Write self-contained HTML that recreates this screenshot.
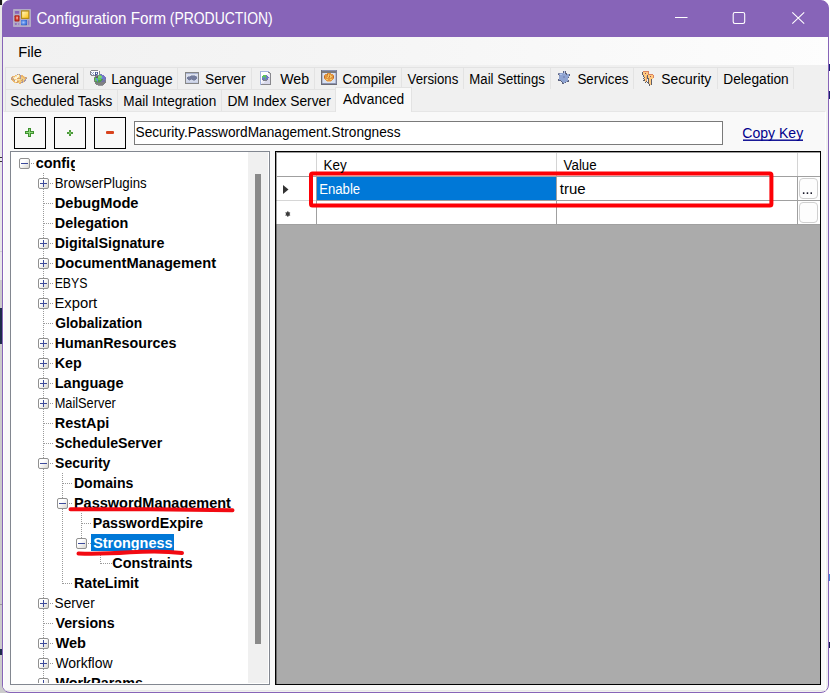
<!DOCTYPE html><html><head><meta charset="utf-8"><title>Configuration Form</title><style>

html,body{margin:0;padding:0;}
body{width:830px;height:693px;background:#fff;overflow:hidden;position:relative;font-family:"Liberation Sans",sans-serif;}
div,span{box-sizing:border-box;}
.abs{position:absolute;}
.t{position:absolute;white-space:nowrap;line-height:20px;height:20px;transform-origin:0 0;font-family:"Liberation Sans",sans-serif;}
#win{position:absolute;left:2px;top:0;width:827px;height:693px;background:linear-gradient(180deg,#8764b8 0,#8764b8 36px,#f0f0f0 36px);border:1px solid #8764b8;border-radius:8px;overflow:hidden;}
#title{position:absolute;left:0;top:0;width:100%;height:37px;background:#8764b8;}
#menu{position:absolute;left:0;top:37px;width:100%;height:28px;background:linear-gradient(90deg,#f1f1f1 0%,#f6f6f6 50%,#fdfdfd 100%);}
.tab{position:absolute;height:22px;border:1px solid #e3e3e3;border-bottom:none;background:#f0f0f0;}
#page{position:absolute;left:3px;top:111px;width:823px;height:580px;background:#f9f9f9;border:1px solid #fff;border-top:1px solid #e6e6e6;border-bottom:1px solid #e8e8e8;}
.btn{position:absolute;top:117px;width:32px;height:32px;border:1px solid #000;background:#f9f9f9;}
#tb{position:absolute;left:134px;top:121px;width:589px;height:24px;border:1px solid #7a7a7a;background:#fff;}
#tree{position:absolute;left:10px;top:151px;width:260px;height:534px;border:1px solid #828790;background:#fff;overflow:hidden;}
#grid{position:absolute;left:275px;top:151px;width:546px;height:534px;border:1px solid #000;background:#ababab;overflow:hidden;}
#grid:after{content:"";position:absolute;left:0;top:0;width:100%;height:100%;box-shadow:inset 1px 1px 0 rgba(0,0,0,.38);}
.exp{position:absolute;width:11px;height:11px;border:1px solid #919191;border-radius:2px;background:linear-gradient(135deg,#fff 0%,#fff 35%,#d8d6d0 100%);}
.exp:before{content:"";position:absolute;left:1px;top:4px;width:7px;height:1px;background:#3c4a9a;}
.exp.p:after{content:"";position:absolute;left:4px;top:1px;width:1px;height:7px;background:#3c4a9a;}
.vd{position:absolute;width:1px;background:repeating-linear-gradient(180deg,#9a9a9a 0,#9a9a9a 1px,transparent 1px,transparent 2px);}
.hd{position:absolute;height:1px;background:repeating-linear-gradient(90deg,#9a9a9a 0,#9a9a9a 1px,transparent 1px,transparent 2px);}

</style></head><body>
<div class="abs" style="left:0;top:0;width:3px;height:280px;background:#e8e8e8"></div>
<div class="abs" style="left:0;top:280px;width:3px;height:413px;background:#cbcbcb"></div>
<div class="abs" style="left:0;top:683px;width:10px;height:10px;background:#cbcbcb"></div>
<div class="abs" style="left:0;top:0;width:2px;height:5px;background:#181818"></div>
<div class="abs" style="left:0;top:157px;width:2px;height:1px;background:#333"></div>
<div class="abs" style="left:0;top:161px;width:2px;height:1px;background:#333"></div>
<div class="abs" style="left:0;top:251px;width:2px;height:1px;background:#d0d0d0"></div>
<div class="abs" style="left:0;top:308px;width:2px;height:36px;background:#1c2a4a"></div>
<div class="abs" style="left:0;top:604px;width:2px;height:1px;background:#999"></div>
<div class="abs" style="left:0;top:649px;width:2px;height:6px;background:#1c2a4a"></div>
<div class="abs" style="left:829px;top:64px;width:1px;height:7px;background:#1c1c7a"></div>
<div class="abs" style="left:829px;top:91px;width:1px;height:8px;background:#1c2070"></div>
<div class="abs" style="left:829px;top:574px;width:1px;height:7px;background:#4a8ae0"></div>
<div class="abs" style="left:829px;top:642px;width:1px;height:6px;background:#1c2050"></div>
<div id="win">
<div id="in" class="abs" style="left:-3px;top:-1px;width:830px;height:693px;">
<div id="title" style="left:0;width:830px"></div>
<div id="menu" style="left:0;width:830px"></div>
<svg class="abs" style="left:13px;top:9px" width="18" height="18" viewBox="0 0 18 18">
<defs>
<linearGradient id="ty" x1="0" y1="0" x2="1" y2="1"><stop offset="0" stop-color="#fff4c0"/><stop offset="1" stop-color="#ffc414"/></linearGradient>
<radialGradient id="tr" cx=".5" cy=".45" r=".6"><stop offset="0" stop-color="#f07868"/><stop offset=".5" stop-color="#cc3020"/><stop offset="1" stop-color="#9c1c14"/></radialGradient>
<radialGradient id="tb" cx=".4" cy=".45" r=".7"><stop offset="0" stop-color="#a4c4ff"/><stop offset=".6" stop-color="#4a7ee0"/><stop offset="1" stop-color="#2c58b8"/></radialGradient>
</defs>
<rect x="0" y="0" width="18" height="18" rx=".8" fill="#b3abc6"/>
<rect x="1.900" y="1.900" width="4.300" height="2.900" rx=".5" fill="#8764b8"/>
<rect x="1.900" y="14" width="1.900" height="2" rx=".4" fill="#8f70bc"/>
<rect x="5.100" y="14" width="1.200" height="2" rx=".4" fill="#9a80c0"/>
<rect x="15.100" y="11.300" width="1.200" height="4.700" rx=".4" fill="#9478be"/>
<rect x="8" y="1.200" width="8.400" height="8.800" rx=".6" fill="#b48c18"/>
<rect x="9.100" y="2.600" width="6.200" height="6.200" fill="url(#ty)"/>
<rect x="1.500" y="6.200" width="5" height="6.400" rx="1" fill="url(#tr)"/>
<path d="M3.200 7.800h1.800l-.5 2.800h-.8z" fill="#f8b0a8" opacity=".85"/>
<rect x="8" y="11.100" width="6.100" height="5.100" rx=".6" fill="url(#tb)"/>
</svg>
<svg class="abs" style="left:660px;top:0" width="160" height="37" viewBox="660 0 160 37" fill="none" stroke="#fff" stroke-width="1.1">
<path d="M675 17.5H687.5"/>
<rect x="733.2" y="12.5" width="11.5" height="11" rx="1.7"/>
<path d="M792.3 12.3L804.2 23.7M804.2 12.3L792.3 23.7"/>
</svg>
<div class="tab" style="left:5px;top:67px;width:79px;"></div>
<div class="tab" style="left:83px;top:67px;width:95px;"></div>
<div class="tab" style="left:177px;top:67px;width:75px;"></div>
<div class="tab" style="left:251px;top:67px;width:64px;"></div>
<div class="tab" style="left:314px;top:67px;width:88px;"></div>
<div class="tab" style="left:401px;top:67px;width:63px;"></div>
<div class="tab" style="left:463px;top:67px;width:88px;"></div>
<div class="tab" style="left:550px;top:67px;width:84px;"></div>
<div class="tab" style="left:633px;top:67px;width:85px;"></div>
<div class="tab" style="left:717px;top:67px;width:77px;"></div>
<div class="tab" style="left:5px;top:89px;width:113px;"></div>
<div class="tab" style="left:117px;top:89px;width:105px;"></div>
<div class="tab" style="left:221px;top:89px;width:115px;"></div>
<div id="page"></div>
<div class="tab" style="left:335px;top:87px;width:77px;height:25px;background:#f9f9f9;border-color:#e3e3e3;"></div>
<svg class="abs" style="left:11px;top:74px" width="16" height="10" viewBox="0 0 16 10" shape-rendering="crispEdges"><rect x="6" y="0" width="1" height="1" fill="#a596a6"/><rect x="7" y="0" width="1" height="1" fill="#f3cd7c"/><rect x="8" y="0" width="1" height="1" fill="#a596a6"/><rect x="4" y="1" width="1" height="1" fill="#ecb46c"/><rect x="5" y="1" width="1" height="1" fill="#f3cd7c"/><rect x="6" y="1" width="2" height="1" fill="#fdf3dc"/><rect x="8" y="1" width="1" height="1" fill="#f3cd7c"/><rect x="9" y="1" width="1" height="1" fill="#a596a6"/><rect x="10" y="1" width="2" height="1" fill="#ecb46c"/><rect x="1" y="2" width="3" height="1" fill="#ecb46c"/><rect x="4" y="2" width="2" height="1" fill="#f8e2ae"/><rect x="6" y="2" width="2" height="1" fill="#fdf3dc"/><rect x="8" y="2" width="1" height="1" fill="#f3cd7c"/><rect x="9" y="2" width="1" height="1" fill="#a596a6"/><rect x="10" y="2" width="3" height="1" fill="#ecb46c"/><rect x="13" y="2" width="1" height="1" fill="#f8e2ae"/><rect x="0" y="3" width="1" height="1" fill="#ecb46c"/><rect x="1" y="3" width="1" height="1" fill="#a596a6"/><rect x="2" y="3" width="2" height="1" fill="#f8e2ae"/><rect x="4" y="3" width="3" height="1" fill="#fdf3dc"/><rect x="7" y="3" width="2" height="1" fill="#f3cd7c"/><rect x="9" y="3" width="1" height="1" fill="#a596a6"/><rect x="10" y="3" width="2" height="1" fill="#f3cd7c"/><rect x="12" y="3" width="2" height="1" fill="#ecb46c"/><rect x="14" y="3" width="1" height="1" fill="#a596a6"/><rect x="15" y="3" width="1" height="1" fill="#ecb46c"/><rect x="0" y="4" width="1" height="1" fill="#a596a6"/><rect x="1" y="4" width="2" height="1" fill="#ecb46c"/><rect x="3" y="4" width="3" height="1" fill="#fdf3dc"/><rect x="6" y="4" width="3" height="1" fill="#d8a266"/><rect x="9" y="4" width="1" height="1" fill="#a596a6"/><rect x="10" y="4" width="3" height="1" fill="#f3cd7c"/><rect x="13" y="4" width="2" height="1" fill="#ecb46c"/><rect x="15" y="4" width="1" height="1" fill="#a596a6"/><rect x="0" y="5" width="2" height="1" fill="#d8a266"/><rect x="2" y="5" width="1" height="1" fill="#a596a6"/><rect x="3" y="5" width="2" height="1" fill="#f3cd7c"/><rect x="5" y="5" width="4" height="1" fill="#f8e2ae"/><rect x="9" y="5" width="2" height="1" fill="#f3cd7c"/><rect x="11" y="5" width="1" height="1" fill="#a596a6"/><rect x="12" y="5" width="2" height="1" fill="#f3cd7c"/><rect x="14" y="5" width="1" height="1" fill="#a596a6"/><rect x="1" y="6" width="2" height="1" fill="#ecb46c"/><rect x="3" y="6" width="1" height="1" fill="#a596a6"/><rect x="4" y="6" width="2" height="1" fill="#fdf3dc"/><rect x="6" y="6" width="4" height="1" fill="#f3cd7c"/><rect x="10" y="6" width="2" height="1" fill="#d8a266"/><rect x="12" y="6" width="1" height="1" fill="#f3cd7c"/><rect x="13" y="6" width="2" height="1" fill="#a596a6"/><rect x="2" y="7" width="2" height="1" fill="#ecb46c"/><rect x="4" y="7" width="2" height="1" fill="#fdf3dc"/><rect x="6" y="7" width="2" height="1" fill="#d8a266"/><rect x="8" y="7" width="3" height="1" fill="#f3cd7c"/><rect x="11" y="7" width="1" height="1" fill="#a596a6"/><rect x="12" y="7" width="1" height="1" fill="#ecb46c"/><rect x="13" y="7" width="1" height="1" fill="#a596a6"/><rect x="3" y="8" width="2" height="1" fill="#f3cd7c"/><rect x="5" y="8" width="2" height="1" fill="#d8a266"/><rect x="7" y="8" width="2" height="1" fill="#f3cd7c"/><rect x="9" y="8" width="1" height="1" fill="#ecb46c"/><rect x="10" y="8" width="2" height="1" fill="#a596a6"/><rect x="12" y="8" width="1" height="1" fill="#f8e2ae"/><rect x="8" y="9" width="2" height="1" fill="#ecb46c"/></svg>
<svg class="abs" style="left:89px;top:69px" width="18" height="17" viewBox="0 0 18 17" shape-rendering="crispEdges"><rect x="2" y="1" width="7" height="1" fill="#86868c"/><rect x="1" y="2" width="1" height="1" fill="#86868c"/><rect x="2" y="2" width="8" height="1" fill="#ffffff"/><rect x="10" y="2" width="1" height="1" fill="#86868c"/><rect x="1" y="3" width="1" height="1" fill="#86868c"/><rect x="2" y="3" width="1" height="1" fill="#8c9cc4"/><rect x="3" y="3" width="1" height="1" fill="#ffffff"/><rect x="4" y="3" width="1" height="1" fill="#8c9cc4"/><rect x="5" y="3" width="1" height="1" fill="#ffffff"/><rect x="6" y="3" width="1" height="1" fill="#4a5a94"/><rect x="7" y="3" width="1" height="1" fill="#8c9cc4"/><rect x="8" y="3" width="1" height="1" fill="#4a5a94"/><rect x="9" y="3" width="1" height="1" fill="#ffffff"/><rect x="10" y="3" width="1" height="1" fill="#86868c"/><rect x="1" y="4" width="1" height="1" fill="#86868c"/><rect x="2" y="4" width="1" height="1" fill="#ffffff"/><rect x="3" y="4" width="1" height="1" fill="#8c9cc4"/><rect x="4" y="4" width="2" height="1" fill="#ffffff"/><rect x="6" y="4" width="1" height="1" fill="#4a5a94"/><rect x="7" y="4" width="1" height="1" fill="#ffffff"/><rect x="8" y="4" width="1" height="1" fill="#4a5a94"/><rect x="9" y="4" width="1" height="1" fill="#ffffff"/><rect x="10" y="4" width="1" height="1" fill="#86868c"/><rect x="1" y="5" width="1" height="1" fill="#86868c"/><rect x="2" y="5" width="1" height="1" fill="#8c9cc4"/><rect x="3" y="5" width="1" height="1" fill="#ffffff"/><rect x="4" y="5" width="1" height="1" fill="#8c9cc4"/><rect x="5" y="5" width="1" height="1" fill="#ffffff"/><rect x="6" y="5" width="2" height="1" fill="#4a5a94"/><rect x="8" y="5" width="1" height="1" fill="#8c9cc4"/><rect x="9" y="5" width="1" height="1" fill="#ffffff"/><rect x="10" y="5" width="1" height="1" fill="#86868c"/><rect x="11" y="5" width="2" height="1" fill="#7676c4"/><rect x="2" y="6" width="4" height="1" fill="#86868c"/><rect x="6" y="6" width="1" height="1" fill="#4a5a94"/><rect x="7" y="6" width="3" height="1" fill="#86868c"/><rect x="10" y="6" width="2" height="1" fill="#62c462"/><rect x="12" y="6" width="3" height="1" fill="#7676c4"/><rect x="6" y="7" width="2" height="1" fill="#808084"/><rect x="8" y="7" width="1" height="1" fill="#665466"/><rect x="9" y="7" width="4" height="1" fill="#74d474"/><rect x="13" y="7" width="3" height="1" fill="#7676c4"/><rect x="5" y="8" width="1" height="1" fill="#808084"/><rect x="6" y="8" width="1" height="1" fill="#509a50"/><rect x="7" y="8" width="2" height="1" fill="#665466"/><rect x="9" y="8" width="4" height="1" fill="#74d474"/><rect x="13" y="8" width="1" height="1" fill="#5890e0"/><rect x="14" y="8" width="3" height="1" fill="#7676c4"/><rect x="5" y="9" width="1" height="1" fill="#509a50"/><rect x="6" y="9" width="1" height="1" fill="#62c462"/><rect x="7" y="9" width="1" height="1" fill="#5890e0"/><rect x="8" y="9" width="4" height="1" fill="#62c462"/><rect x="12" y="9" width="1" height="1" fill="#5890e0"/><rect x="13" y="9" width="3" height="1" fill="#7676c4"/><rect x="16" y="9" width="1" height="1" fill="#7272a4"/><rect x="5" y="10" width="1" height="1" fill="#509a50"/><rect x="6" y="10" width="1" height="1" fill="#62c462"/><rect x="7" y="10" width="2" height="1" fill="#5890e0"/><rect x="9" y="10" width="3" height="1" fill="#62c462"/><rect x="12" y="10" width="2" height="1" fill="#509a50"/><rect x="14" y="10" width="3" height="1" fill="#7676c4"/><rect x="5" y="11" width="1" height="1" fill="#808084"/><rect x="6" y="11" width="2" height="1" fill="#62c462"/><rect x="8" y="11" width="1" height="1" fill="#5890e0"/><rect x="9" y="11" width="4" height="1" fill="#509a50"/><rect x="13" y="11" width="3" height="1" fill="#7272a4"/><rect x="16" y="11" width="1" height="1" fill="#808084"/><rect x="5" y="12" width="1" height="1" fill="#808084"/><rect x="6" y="12" width="2" height="1" fill="#509a50"/><rect x="8" y="12" width="1" height="1" fill="#7272a4"/><rect x="9" y="12" width="3" height="1" fill="#509a50"/><rect x="12" y="12" width="4" height="1" fill="#7272a4"/><rect x="16" y="12" width="1" height="1" fill="#808084"/><rect x="6" y="13" width="1" height="1" fill="#808084"/><rect x="7" y="13" width="4" height="1" fill="#6a8a6a"/><rect x="11" y="13" width="6" height="1" fill="#808084"/><rect x="6" y="14" width="10" height="1" fill="#808084"/><rect x="7" y="15" width="8" height="1" fill="#808084"/><rect x="9" y="16" width="5" height="1" fill="#9a9a9e"/></svg>
<svg class="abs" style="left:185px;top:72px" width="14" height="12" viewBox="0 0 14 12" shape-rendering="crispEdges"><rect x="0" y="0" width="14" height="1" fill="#868686"/><rect x="0" y="1" width="1" height="1" fill="#868686"/><rect x="1" y="1" width="12" height="1" fill="#aab4d0"/><rect x="13" y="1" width="1" height="1" fill="#868686"/><rect x="0" y="2" width="1" height="1" fill="#868686"/><rect x="1" y="2" width="12" height="1" fill="#dde1ee"/><rect x="13" y="2" width="1" height="1" fill="#868686"/><rect x="0" y="3" width="1" height="1" fill="#868686"/><rect x="1" y="3" width="5" height="1" fill="#dde1ee"/><rect x="6" y="3" width="4" height="1" fill="#a2aac2"/><rect x="10" y="3" width="3" height="1" fill="#dde1ee"/><rect x="13" y="3" width="1" height="1" fill="#868686"/><rect x="0" y="4" width="1" height="1" fill="#868686"/><rect x="1" y="4" width="2" height="1" fill="#dde1ee"/><rect x="3" y="4" width="2" height="1" fill="#a2aac2"/><rect x="5" y="4" width="6" height="1" fill="#747c9c"/><rect x="11" y="4" width="1" height="1" fill="#a2aac2"/><rect x="12" y="4" width="1" height="1" fill="#dde1ee"/><rect x="13" y="4" width="1" height="1" fill="#868686"/><rect x="0" y="5" width="1" height="1" fill="#868686"/><rect x="1" y="5" width="1" height="1" fill="#dde1ee"/><rect x="2" y="5" width="10" height="1" fill="#747c9c"/><rect x="12" y="5" width="1" height="1" fill="#d3d9ea"/><rect x="13" y="5" width="1" height="1" fill="#868686"/><rect x="0" y="6" width="1" height="1" fill="#868686"/><rect x="1" y="6" width="1" height="1" fill="#d3d9ea"/><rect x="2" y="6" width="10" height="1" fill="#747c9c"/><rect x="12" y="6" width="1" height="1" fill="#d3d9ea"/><rect x="13" y="6" width="1" height="1" fill="#868686"/><rect x="0" y="7" width="1" height="1" fill="#868686"/><rect x="1" y="7" width="2" height="1" fill="#d3d9ea"/><rect x="3" y="7" width="3" height="1" fill="#747c9c"/><rect x="6" y="7" width="1" height="1" fill="#a2aac2"/><rect x="7" y="7" width="4" height="1" fill="#747c9c"/><rect x="11" y="7" width="2" height="1" fill="#d3d9ea"/><rect x="13" y="7" width="1" height="1" fill="#868686"/><rect x="0" y="8" width="1" height="1" fill="#868686"/><rect x="1" y="8" width="3" height="1" fill="#d3d9ea"/><rect x="4" y="8" width="1" height="1" fill="#a2aac2"/><rect x="5" y="8" width="3" height="1" fill="#d3d9ea"/><rect x="8" y="8" width="2" height="1" fill="#a2aac2"/><rect x="10" y="8" width="3" height="1" fill="#d3d9ea"/><rect x="13" y="8" width="1" height="1" fill="#868686"/><rect x="0" y="9" width="1" height="1" fill="#868686"/><rect x="1" y="9" width="12" height="1" fill="#d3d9ea"/><rect x="13" y="9" width="1" height="1" fill="#868686"/><rect x="0" y="10" width="1" height="1" fill="#868686"/><rect x="1" y="10" width="12" height="1" fill="#c4cce2"/><rect x="13" y="10" width="1" height="1" fill="#868686"/><rect x="0" y="11" width="14" height="1" fill="#868686"/></svg>
<svg class="abs" style="left:260px;top:71px" width="11" height="14" viewBox="0 0 11 14" shape-rendering="crispEdges"><rect x="0" y="0" width="9" height="1" fill="#a4b4e0"/><rect x="0" y="1" width="1" height="1" fill="#a4b4e0"/><rect x="1" y="1" width="7" height="1" fill="#ffffff"/><rect x="8" y="1" width="2" height="1" fill="#87878c"/><rect x="0" y="2" width="1" height="1" fill="#a4b4e0"/><rect x="1" y="2" width="8" height="1" fill="#ffffff"/><rect x="9" y="2" width="1" height="1" fill="#c0c0cc"/><rect x="10" y="2" width="1" height="1" fill="#87878c"/><rect x="0" y="3" width="1" height="1" fill="#a4b4e0"/><rect x="1" y="3" width="6" height="1" fill="#ffffff"/><rect x="7" y="3" width="3" height="1" fill="#eeeef8"/><rect x="10" y="3" width="1" height="1" fill="#87878c"/><rect x="0" y="4" width="1" height="1" fill="#a4b4e0"/><rect x="1" y="4" width="2" height="1" fill="#ffffff"/><rect x="3" y="4" width="3" height="1" fill="#5ec45e"/><rect x="6" y="4" width="1" height="1" fill="#6e6ed0"/><rect x="7" y="4" width="3" height="1" fill="#eeeef8"/><rect x="10" y="4" width="1" height="1" fill="#87878c"/><rect x="0" y="5" width="1" height="1" fill="#a4b4e0"/><rect x="1" y="5" width="1" height="1" fill="#ffffff"/><rect x="2" y="5" width="4" height="1" fill="#5ec45e"/><rect x="6" y="5" width="2" height="1" fill="#6e6ed0"/><rect x="8" y="5" width="2" height="1" fill="#eeeef8"/><rect x="10" y="5" width="1" height="1" fill="#87878c"/><rect x="0" y="6" width="1" height="1" fill="#a4b4e0"/><rect x="1" y="6" width="1" height="1" fill="#ffffff"/><rect x="2" y="6" width="1" height="1" fill="#5ec45e"/><rect x="3" y="6" width="1" height="1" fill="#5a8ae0"/><rect x="4" y="6" width="1" height="1" fill="#6e6ed0"/><rect x="5" y="6" width="2" height="1" fill="#5ec45e"/><rect x="7" y="6" width="2" height="1" fill="#6e6ed0"/><rect x="9" y="6" width="1" height="1" fill="#d8d8ea"/><rect x="10" y="6" width="1" height="1" fill="#87878c"/><rect x="0" y="7" width="1" height="1" fill="#a4b4e0"/><rect x="1" y="7" width="1" height="1" fill="#ffffff"/><rect x="2" y="7" width="2" height="1" fill="#6e6ed0"/><rect x="4" y="7" width="1" height="1" fill="#5ec45e"/><rect x="5" y="7" width="3" height="1" fill="#6e6ed0"/><rect x="8" y="7" width="2" height="1" fill="#d8d8ea"/><rect x="10" y="7" width="1" height="1" fill="#87878c"/><rect x="0" y="8" width="1" height="1" fill="#a4b4e0"/><rect x="1" y="8" width="1" height="1" fill="#ffffff"/><rect x="2" y="8" width="1" height="1" fill="#80808a"/><rect x="3" y="8" width="2" height="1" fill="#6e6ed0"/><rect x="5" y="8" width="1" height="1" fill="#5ec45e"/><rect x="6" y="8" width="1" height="1" fill="#6e6ed0"/><rect x="7" y="8" width="1" height="1" fill="#80808a"/><rect x="8" y="8" width="2" height="1" fill="#d8d8ea"/><rect x="10" y="8" width="1" height="1" fill="#87878c"/><rect x="0" y="9" width="1" height="1" fill="#a4b4e0"/><rect x="1" y="9" width="1" height="1" fill="#ffffff"/><rect x="2" y="9" width="1" height="1" fill="#eeeef8"/><rect x="3" y="9" width="4" height="1" fill="#80808a"/><rect x="7" y="9" width="3" height="1" fill="#d8d8ea"/><rect x="10" y="9" width="1" height="1" fill="#87878c"/><rect x="0" y="10" width="1" height="1" fill="#a4b4e0"/><rect x="1" y="10" width="1" height="1" fill="#ffffff"/><rect x="2" y="10" width="3" height="1" fill="#eeeef8"/><rect x="5" y="10" width="5" height="1" fill="#d8d8ea"/><rect x="10" y="10" width="1" height="1" fill="#87878c"/><rect x="0" y="11" width="1" height="1" fill="#a4b4e0"/><rect x="1" y="11" width="3" height="1" fill="#eeeef8"/><rect x="4" y="11" width="6" height="1" fill="#d8d8ea"/><rect x="10" y="11" width="1" height="1" fill="#87878c"/><rect x="0" y="12" width="1" height="1" fill="#a4b4e0"/><rect x="1" y="12" width="1" height="1" fill="#eeeef8"/><rect x="2" y="12" width="8" height="1" fill="#d8d8ea"/><rect x="10" y="12" width="1" height="1" fill="#87878c"/><rect x="0" y="13" width="1" height="1" fill="#a4b4e0"/><rect x="1" y="13" width="10" height="1" fill="#87878c"/></svg>
<svg class="abs" style="left:321px;top:70px" width="16" height="15" viewBox="0 0 16 15" shape-rendering="crispEdges"><rect x="0" y="0" width="1" height="1" fill="#6c6c76"/><rect x="1" y="0" width="14" height="1" fill="#8a92b4"/><rect x="15" y="0" width="1" height="1" fill="#7c8098"/><rect x="0" y="1" width="1" height="1" fill="#6c6c76"/><rect x="1" y="1" width="14" height="1" fill="#7a7a80"/><rect x="15" y="1" width="1" height="1" fill="#7c8098"/><rect x="0" y="2" width="1" height="1" fill="#6c6c76"/><rect x="1" y="2" width="14" height="1" fill="#7a7a80"/><rect x="15" y="2" width="1" height="1" fill="#7c8098"/><rect x="0" y="3" width="1" height="1" fill="#6c6c76"/><rect x="1" y="3" width="1" height="1" fill="#b4bcd4"/><rect x="2" y="3" width="4" height="1" fill="#d8e0f0"/><rect x="6" y="3" width="4" height="1" fill="#e29440"/><rect x="10" y="3" width="4" height="1" fill="#d8e0f0"/><rect x="14" y="3" width="1" height="1" fill="#b4bcd4"/><rect x="15" y="3" width="1" height="1" fill="#7c8098"/><rect x="0" y="4" width="1" height="1" fill="#6c6c76"/><rect x="1" y="4" width="1" height="1" fill="#b4bcd4"/><rect x="2" y="4" width="2" height="1" fill="#d8e0f0"/><rect x="4" y="4" width="2" height="1" fill="#e29440"/><rect x="6" y="4" width="1" height="1" fill="#b86c30"/><rect x="7" y="4" width="1" height="1" fill="#f4c864"/><rect x="8" y="4" width="4" height="1" fill="#e29440"/><rect x="12" y="4" width="2" height="1" fill="#d8e0f0"/><rect x="14" y="4" width="1" height="1" fill="#b4bcd4"/><rect x="15" y="4" width="1" height="1" fill="#7c8098"/><rect x="0" y="5" width="1" height="1" fill="#6c6c76"/><rect x="1" y="5" width="1" height="1" fill="#b4bcd4"/><rect x="2" y="5" width="1" height="1" fill="#d8e0f0"/><rect x="3" y="5" width="4" height="1" fill="#e29440"/><rect x="7" y="5" width="1" height="1" fill="#f4c864"/><rect x="8" y="5" width="1" height="1" fill="#e29440"/><rect x="9" y="5" width="1" height="1" fill="#f4c864"/><rect x="10" y="5" width="3" height="1" fill="#e29440"/><rect x="13" y="5" width="1" height="1" fill="#d8e0f0"/><rect x="14" y="5" width="1" height="1" fill="#b4bcd4"/><rect x="15" y="5" width="1" height="1" fill="#7c8098"/><rect x="0" y="6" width="1" height="1" fill="#6c6c76"/><rect x="1" y="6" width="1" height="1" fill="#b4bcd4"/><rect x="2" y="6" width="1" height="1" fill="#d8e0f0"/><rect x="3" y="6" width="1" height="1" fill="#b86c30"/><rect x="4" y="6" width="3" height="1" fill="#e29440"/><rect x="7" y="6" width="1" height="1" fill="#f4c864"/><rect x="8" y="6" width="1" height="1" fill="#b86c30"/><rect x="9" y="6" width="2" height="1" fill="#f4c864"/><rect x="11" y="6" width="1" height="1" fill="#e29440"/><rect x="12" y="6" width="1" height="1" fill="#b86c30"/><rect x="13" y="6" width="1" height="1" fill="#d8e0f0"/><rect x="14" y="6" width="1" height="1" fill="#b4bcd4"/><rect x="15" y="6" width="1" height="1" fill="#7c8098"/><rect x="0" y="7" width="1" height="1" fill="#6c6c76"/><rect x="1" y="7" width="1" height="1" fill="#b4bcd4"/><rect x="2" y="7" width="1" height="1" fill="#d8e0f0"/><rect x="3" y="7" width="1" height="1" fill="#b86c30"/><rect x="4" y="7" width="2" height="1" fill="#e29440"/><rect x="6" y="7" width="1" height="1" fill="#f4c864"/><rect x="7" y="7" width="2" height="1" fill="#e29440"/><rect x="9" y="7" width="1" height="1" fill="#f4c864"/><rect x="10" y="7" width="2" height="1" fill="#e29440"/><rect x="12" y="7" width="1" height="1" fill="#b86c30"/><rect x="13" y="7" width="1" height="1" fill="#d8e0f0"/><rect x="14" y="7" width="1" height="1" fill="#b4bcd4"/><rect x="15" y="7" width="1" height="1" fill="#7c8098"/><rect x="0" y="8" width="1" height="1" fill="#6c6c76"/><rect x="1" y="8" width="1" height="1" fill="#b4bcd4"/><rect x="2" y="8" width="1" height="1" fill="#d8e0f0"/><rect x="3" y="8" width="10" height="1" fill="#e29440"/><rect x="13" y="8" width="1" height="1" fill="#d8e0f0"/><rect x="14" y="8" width="1" height="1" fill="#b4bcd4"/><rect x="15" y="8" width="1" height="1" fill="#7c8098"/><rect x="0" y="9" width="1" height="1" fill="#6c6c76"/><rect x="1" y="9" width="1" height="1" fill="#b4bcd4"/><rect x="2" y="9" width="2" height="1" fill="#d8e0f0"/><rect x="4" y="9" width="1" height="1" fill="#e29440"/><rect x="5" y="9" width="2" height="1" fill="#f4c864"/><rect x="7" y="9" width="2" height="1" fill="#e29440"/><rect x="9" y="9" width="2" height="1" fill="#f4c864"/><rect x="11" y="9" width="1" height="1" fill="#e29440"/><rect x="12" y="9" width="2" height="1" fill="#d8e0f0"/><rect x="14" y="9" width="1" height="1" fill="#b4bcd4"/><rect x="15" y="9" width="1" height="1" fill="#7c8098"/><rect x="0" y="10" width="1" height="1" fill="#6c6c76"/><rect x="1" y="10" width="1" height="1" fill="#b4bcd4"/><rect x="2" y="10" width="3" height="1" fill="#d8e0f0"/><rect x="5" y="10" width="6" height="1" fill="#e29440"/><rect x="11" y="10" width="3" height="1" fill="#d8e0f0"/><rect x="14" y="10" width="1" height="1" fill="#b4bcd4"/><rect x="15" y="10" width="1" height="1" fill="#7c8098"/><rect x="0" y="11" width="1" height="1" fill="#6c6c76"/><rect x="1" y="11" width="1" height="1" fill="#b4bcd4"/><rect x="2" y="11" width="4" height="1" fill="#d8e0f0"/><rect x="6" y="11" width="4" height="1" fill="#ecc08c"/><rect x="10" y="11" width="4" height="1" fill="#d8e0f0"/><rect x="14" y="11" width="1" height="1" fill="#b4bcd4"/><rect x="15" y="11" width="1" height="1" fill="#7c8098"/><rect x="0" y="12" width="1" height="1" fill="#6c6c76"/><rect x="1" y="12" width="1" height="1" fill="#b4bcd4"/><rect x="2" y="12" width="12" height="1" fill="#d8e0f0"/><rect x="14" y="12" width="1" height="1" fill="#b4bcd4"/><rect x="15" y="12" width="1" height="1" fill="#7c8098"/><rect x="0" y="13" width="1" height="1" fill="#6c6c76"/><rect x="1" y="13" width="14" height="1" fill="#8c94b2"/><rect x="15" y="13" width="1" height="1" fill="#7c8098"/><rect x="0" y="14" width="16" height="1" fill="#6c6c76"/></svg>
<svg class="abs" style="left:558px;top:71px" width="13" height="13" viewBox="0 0 13 13" shape-rendering="crispEdges"><rect x="5" y="0" width="1" height="1" fill="#5c627c"/><rect x="6" y="0" width="1" height="1" fill="#b4c4ea"/><rect x="7" y="0" width="1" height="1" fill="#5c627c"/><rect x="5" y="1" width="1" height="1" fill="#5c627c"/><rect x="6" y="1" width="1" height="1" fill="#b4c4ea"/><rect x="7" y="1" width="1" height="1" fill="#5c627c"/><rect x="0" y="2" width="2" height="1" fill="#7e86a6"/><rect x="2" y="2" width="4" height="1" fill="#8fa4d2"/><rect x="6" y="2" width="1" height="1" fill="#b4c4ea"/><rect x="7" y="2" width="2" height="1" fill="#5c627c"/><rect x="0" y="3" width="1" height="1" fill="#5c627c"/><rect x="1" y="3" width="1" height="1" fill="#8fa4d2"/><rect x="2" y="3" width="2" height="1" fill="#b4c4ea"/><rect x="4" y="3" width="4" height="1" fill="#8fa4d2"/><rect x="8" y="3" width="1" height="1" fill="#5c627c"/><rect x="9" y="3" width="2" height="1" fill="#8fa4d2"/><rect x="11" y="3" width="1" height="1" fill="#5c627c"/><rect x="1" y="4" width="1" height="1" fill="#7e86a6"/><rect x="2" y="4" width="9" height="1" fill="#8fa4d2"/><rect x="11" y="4" width="1" height="1" fill="#5c627c"/><rect x="1" y="5" width="4" height="1" fill="#8fa4d2"/><rect x="5" y="5" width="2" height="1" fill="#7c8cbc"/><rect x="7" y="5" width="4" height="1" fill="#8fa4d2"/><rect x="1" y="6" width="4" height="1" fill="#8fa4d2"/><rect x="5" y="6" width="2" height="1" fill="#7c8cbc"/><rect x="7" y="6" width="3" height="1" fill="#8fa4d2"/><rect x="10" y="6" width="1" height="1" fill="#5c627c"/><rect x="1" y="7" width="9" height="1" fill="#8fa4d2"/><rect x="0" y="8" width="1" height="1" fill="#5c627c"/><rect x="1" y="8" width="9" height="1" fill="#8fa4d2"/><rect x="0" y="9" width="3" height="1" fill="#5c627c"/><rect x="3" y="9" width="7" height="1" fill="#8fa4d2"/><rect x="10" y="9" width="1" height="1" fill="#5c627c"/><rect x="3" y="10" width="1" height="1" fill="#5c627c"/><rect x="4" y="10" width="5" height="1" fill="#8fa4d2"/><rect x="9" y="10" width="2" height="1" fill="#5c627c"/><rect x="4" y="11" width="1" height="1" fill="#5c627c"/><rect x="5" y="11" width="2" height="1" fill="#8fa4d2"/><rect x="7" y="11" width="1" height="1" fill="#5c627c"/><rect x="4" y="12" width="2" height="1" fill="#5c627c"/></svg>
<svg class="abs" style="left:642px;top:71px" width="12" height="15" viewBox="0 0 12 15" shape-rendering="crispEdges"><rect x="1" y="0" width="6" height="1" fill="#d9825e"/><rect x="0" y="1" width="1" height="1" fill="#5e5e68"/><rect x="1" y="1" width="5" height="1" fill="#ffc97e"/><rect x="6" y="1" width="1" height="1" fill="#d9825e"/><rect x="0" y="2" width="1" height="1" fill="#5e5e68"/><rect x="1" y="2" width="2" height="1" fill="#ffc97e"/><rect x="3" y="2" width="1" height="1" fill="#8a4a6c"/><rect x="4" y="2" width="2" height="1" fill="#ffc97e"/><rect x="6" y="2" width="1" height="1" fill="#d9825e"/><rect x="0" y="3" width="1" height="1" fill="#5e5e68"/><rect x="1" y="3" width="5" height="1" fill="#ffc97e"/><rect x="6" y="3" width="5" height="1" fill="#d9825e"/><rect x="1" y="4" width="1" height="1" fill="#5e5e68"/><rect x="2" y="4" width="3" height="1" fill="#ffc97e"/><rect x="5" y="4" width="1" height="1" fill="#5e5e68"/><rect x="6" y="4" width="5" height="1" fill="#ffc97e"/><rect x="11" y="4" width="1" height="1" fill="#d9825e"/><rect x="1" y="5" width="1" height="1" fill="#5e5e68"/><rect x="2" y="5" width="2" height="1" fill="#ffc97e"/><rect x="4" y="5" width="1" height="1" fill="#f0a66a"/><rect x="5" y="5" width="1" height="1" fill="#5e5e68"/><rect x="6" y="5" width="2" height="1" fill="#ffc97e"/><rect x="8" y="5" width="1" height="1" fill="#8a4a6c"/><rect x="9" y="5" width="2" height="1" fill="#ffc97e"/><rect x="11" y="5" width="1" height="1" fill="#d9825e"/><rect x="2" y="6" width="1" height="1" fill="#5e5e68"/><rect x="3" y="6" width="1" height="1" fill="#ffc97e"/><rect x="4" y="6" width="1" height="1" fill="#f0a66a"/><rect x="5" y="6" width="1" height="1" fill="#5e5e68"/><rect x="6" y="6" width="5" height="1" fill="#ffc97e"/><rect x="11" y="6" width="1" height="1" fill="#d9825e"/><rect x="1" y="7" width="1" height="1" fill="#5e5e68"/><rect x="2" y="7" width="2" height="1" fill="#ffc97e"/><rect x="4" y="7" width="1" height="1" fill="#f0a66a"/><rect x="5" y="7" width="2" height="1" fill="#5e5e68"/><rect x="7" y="7" width="4" height="1" fill="#ffc97e"/><rect x="2" y="8" width="1" height="1" fill="#5e5e68"/><rect x="3" y="8" width="1" height="1" fill="#ffc97e"/><rect x="4" y="8" width="1" height="1" fill="#f0a66a"/><rect x="6" y="8" width="1" height="1" fill="#5e5e68"/><rect x="7" y="8" width="2" height="1" fill="#ffc97e"/><rect x="9" y="8" width="1" height="1" fill="#5e5e68"/><rect x="1" y="9" width="2" height="1" fill="#5e5e68"/><rect x="3" y="9" width="1" height="1" fill="#ffc97e"/><rect x="4" y="9" width="1" height="1" fill="#f0a66a"/><rect x="6" y="9" width="1" height="1" fill="#5e5e68"/><rect x="7" y="9" width="2" height="1" fill="#ffc97e"/><rect x="9" y="9" width="1" height="1" fill="#5e5e68"/><rect x="3" y="10" width="1" height="1" fill="#ffc97e"/><rect x="4" y="10" width="1" height="1" fill="#5e5e68"/><rect x="6" y="10" width="1" height="1" fill="#5e5e68"/><rect x="7" y="10" width="2" height="1" fill="#ffc97e"/><rect x="9" y="10" width="1" height="1" fill="#5e5e68"/><rect x="3" y="11" width="1" height="1" fill="#5e5e68"/><rect x="5" y="11" width="2" height="1" fill="#5e5e68"/><rect x="7" y="11" width="2" height="1" fill="#ffc97e"/><rect x="9" y="11" width="1" height="1" fill="#5e5e68"/><rect x="6" y="12" width="1" height="1" fill="#5e5e68"/><rect x="7" y="12" width="2" height="1" fill="#ffc97e"/><rect x="9" y="12" width="1" height="1" fill="#5e5e68"/><rect x="7" y="13" width="1" height="1" fill="#5e5e68"/><rect x="8" y="13" width="1" height="1" fill="#ffc97e"/><rect x="9" y="13" width="1" height="1" fill="#5e5e68"/><rect x="7" y="14" width="1" height="1" fill="#5e5e68"/></svg>
<div class="btn" style="left:14px"></div>
<div class="btn" style="left:54px"></div>
<div class="btn" style="left:94px"></div>
<svg class="abs" style="left:24px;top:127px" width="11" height="11" viewBox="0 0 11 11" shape-rendering="crispEdges"><path d="M4 1h3v3h3v3h-3v3h-3v-3h-3v-3h3z" fill="#3f922f"/><path d="M5 2h1v3h3v1h-3v3h-1v-3h-3v-1h3z" fill="#8cd579" shape-rendering="auto"/></svg>
<svg class="abs" style="left:66px;top:129px" width="8" height="8" viewBox="0 0 8 8" shape-rendering="crispEdges"><path d="M3 1h2v2h2v2h-2v2h-2v-2h-2v-2h2z" fill="#4d9a3c"/><rect x="3" y="3" width="2" height="2" fill="#7cc468"/></svg>
<div class="abs" style="left:106px;top:131px;width:8px;height:3px;background:#d8431e;border-radius:1px"></div>
<div id="tb"></div>
<div id="tree"><div class="abs" style="left:-11px;top:-152px;width:830px;height:693px;">
<div class="abs" style="left:248px;top:152px;width:20px;height:531px;background:#f0f0f0"></div>
<div class="abs" style="left:255px;top:174px;width:6px;height:470px;background:#8a8a8a"></div>
<div class="abs" style="left:91px;top:534px;width:83px;height:17px;background:#0078d7"></div>
<div class="vd" style="left:43px;top:173px;height:520px"></div>
<div class="vd" style="left:62px;top:473px;height:111px"></div>
<div class="vd" style="left:81px;top:513px;height:25px"></div>
<div class="vd" style="left:100px;top:553px;height:11px"></div>
<div class="hd" style="left:31px;top:163px;width:4px"></div>
<div class="exp " style="left:19px;top:158px"></div>
<div class="hd" style="left:50px;top:183px;width:4px"></div>
<div class="exp p" style="left:38px;top:178px"></div>
<div class="hd" style="left:44px;top:203px;width:10px"></div>
<div class="hd" style="left:44px;top:223px;width:10px"></div>
<div class="hd" style="left:50px;top:243px;width:4px"></div>
<div class="exp p" style="left:38px;top:238px"></div>
<div class="hd" style="left:50px;top:263px;width:4px"></div>
<div class="exp p" style="left:38px;top:258px"></div>
<div class="hd" style="left:50px;top:283px;width:4px"></div>
<div class="exp p" style="left:38px;top:278px"></div>
<div class="hd" style="left:50px;top:303px;width:4px"></div>
<div class="exp p" style="left:38px;top:298px"></div>
<div class="hd" style="left:44px;top:323px;width:10px"></div>
<div class="hd" style="left:50px;top:343px;width:4px"></div>
<div class="exp p" style="left:38px;top:338px"></div>
<div class="hd" style="left:50px;top:363px;width:4px"></div>
<div class="exp p" style="left:38px;top:358px"></div>
<div class="hd" style="left:50px;top:383px;width:4px"></div>
<div class="exp p" style="left:38px;top:378px"></div>
<div class="hd" style="left:50px;top:403px;width:4px"></div>
<div class="exp p" style="left:38px;top:398px"></div>
<div class="hd" style="left:44px;top:423px;width:10px"></div>
<div class="hd" style="left:44px;top:443px;width:10px"></div>
<div class="hd" style="left:50px;top:463px;width:4px"></div>
<div class="exp " style="left:38px;top:458px"></div>
<div class="hd" style="left:63px;top:483px;width:10px"></div>
<div class="hd" style="left:69px;top:503px;width:4px"></div>
<div class="exp " style="left:57px;top:498px"></div>
<div class="hd" style="left:82px;top:523px;width:10px"></div>
<div class="hd" style="left:88px;top:543px;width:4px"></div>
<div class="exp " style="left:76px;top:538px"></div>
<div class="hd" style="left:101px;top:563px;width:11px"></div>
<div class="hd" style="left:63px;top:583px;width:10px"></div>
<div class="hd" style="left:50px;top:603px;width:4px"></div>
<div class="exp p" style="left:38px;top:598px"></div>
<div class="hd" style="left:44px;top:623px;width:10px"></div>
<div class="hd" style="left:50px;top:643px;width:4px"></div>
<div class="exp p" style="left:38px;top:638px"></div>
<div class="hd" style="left:50px;top:663px;width:4px"></div>
<div class="exp p" style="left:38px;top:658px"></div>
<div class="hd" style="left:50px;top:683px;width:4px"></div>
<div class="exp p" style="left:38px;top:678px"></div>
<div class="abs" style="left:0;top:0;width:75.200px;height:693px;overflow:hidden"><span class="t" style="left:35px;top:152.97px;font-size:14px;color:#000;transform:translateX(0.654px) scaleX(1.03100);font-weight:bold;">config</span></div>
<span class="t" style="left:54px;top:172.97px;font-size:14px;color:#000;transform:translateX(0.684px) scaleX(0.94529);">BrowserPlugins</span>
<span class="t" style="left:54px;top:192.97px;font-size:14px;color:#000;transform:translateX(0.666px) scaleX(1.04680);font-weight:bold;">DebugMode</span>
<span class="t" style="left:54px;top:212.97px;font-size:14px;color:#000;transform:translateX(0.778px) scaleX(1.02763);font-weight:bold;">Delegation</span>
<span class="t" style="left:54px;top:232.97px;font-size:14px;color:#000;transform:translateX(0.784px) scaleX(1.02070);font-weight:bold;">DigitalSignature</span>
<span class="t" style="left:54px;top:252.97px;font-size:14px;color:#000;transform:translateX(0.664px) scaleX(1.04809);font-weight:bold;">DocumentManagement</span>
<span class="t" style="left:54px;top:272.97px;font-size:14px;color:#000;transform:translateX(0.648px) scaleX(0.87899);">EBYS</span>
<span class="t" style="left:54px;top:292.97px;font-size:14px;color:#000;transform:translateX(0.431px) scaleX(1.05655);">Export</span>
<span class="t" style="left:55px;top:312.97px;font-size:14px;color:#000;transform:translateX(0.163px) scaleX(0.99106);font-weight:bold;">Globalization</span>
<span class="t" style="left:54px;top:332.97px;font-size:14px;color:#000;transform:translateX(0.783px) scaleX(1.02142);font-weight:bold;">HumanResources</span>
<span class="t" style="left:54px;top:352.97px;font-size:14px;color:#000;transform:translateX(0.779px) scaleX(1.02009);font-weight:bold;">Kep</span>
<span class="t" style="left:54px;top:372.97px;font-size:14px;color:#000;transform:translateX(0.672px) scaleX(1.04068);font-weight:bold;">Language</span>
<span class="t" style="left:54px;top:392.97px;font-size:14px;color:#000;transform:translateX(0.639px) scaleX(0.91347);">MailServer</span>
<span class="t" style="left:54px;top:412.97px;font-size:14px;color:#000;transform:translateX(0.775px) scaleX(1.03049);font-weight:bold;">RestApi</span>
<span class="t" style="left:55px;top:432.97px;font-size:14px;color:#000;transform:translateX(0.014px) scaleX(1.01243);font-weight:bold;">ScheduleServer</span>
<span class="t" style="left:55px;top:452.97px;font-size:14px;color:#000;transform:translateX(0.034px) scaleX(1.00131);font-weight:bold;">Security</span>
<span class="t" style="left:73px;top:472.97px;font-size:14px;color:#000;transform:translateX(0.948px) scaleX(1.00546);font-weight:bold;">Domains</span>
<span class="t" style="left:73px;top:492.97px;font-size:14px;color:#000;transform:translateX(0.936px) scaleX(1.03478);font-weight:bold;">PasswordManagement</span>
<span class="t" style="left:92px;top:512.97px;font-size:14px;color:#000;transform:translateX(0.708px) scaleX(1.01399);font-weight:bold;">PasswordExpire</span>
<span class="t" style="left:93px;top:532.97px;font-size:14px;color:#fff;transform:translateX(0.135px) scaleX(1.02976);font-weight:bold;">Strongness</span>
<span class="t" style="left:112px;top:552.97px;font-size:14px;color:#000;transform:translateX(0.305px) scaleX(1.03106);font-weight:bold;">Constraints</span>
<span class="t" style="left:73px;top:572.97px;font-size:14px;color:#000;transform:translateX(0.985px) scaleX(1.01577);font-weight:bold;">RateLimit</span>
<span class="t" style="left:54px;top:592.97px;font-size:14px;color:#000;transform:translateX(0.591px) scaleX(0.97271);">Server</span>
<span class="t" style="left:55px;top:612.97px;font-size:14px;color:#000;transform:translateX(0.530px) scaleX(1.01302);font-weight:bold;">Versions</span>
<span class="t" style="left:55px;top:632.97px;font-size:14px;color:#000;transform:translateX(0.414px) scaleX(1.03882);font-weight:bold;">Web</span>
<span class="t" style="left:55px;top:652.97px;font-size:14px;color:#000;transform:translateX(0.464px) scaleX(0.99493);">Workflow</span>
<span class="t" style="left:55px;top:672.97px;font-size:14px;color:#000;transform:translateX(0.415px) scaleX(1.02651);font-weight:bold;">WorkParams</span>
<div class="abs" style="left:11px;top:683px;width:258px;height:1px;background:#fff"></div>
<svg class="abs" style="left:60px;top:500px" width="190" height="62" viewBox="60 500 190 62" fill="none" stroke="#f20a12" stroke-width="4" stroke-linecap="round">
<path d="M70.500 509.300 L150 509.200 L232.500 510.200"/>
<path d="M78.500 553.500 Q100 554.300 130 552.300 T182 553"/>
</svg>
</div></div>
<div id="grid"><div class="abs" style="left:-276px;top:-152px;width:830px;height:693px;">
<div class="abs" style="left:276px;top:152px;width:544px;height:72px;background:#fff"></div>
<div class="abs" style="left:316px;top:153px;width:1px;height:23px;background:#d4d4d4"></div>
<div class="abs" style="left:316px;top:176px;width:1px;height:48px;background:#a0a0a0"></div>
<div class="abs" style="left:556px;top:153px;width:1px;height:23px;background:#d4d4d4"></div>
<div class="abs" style="left:556px;top:176px;width:1px;height:48px;background:#a0a0a0"></div>
<div class="abs" style="left:797px;top:153px;width:1px;height:23px;background:#d4d4d4"></div>
<div class="abs" style="left:797px;top:176px;width:1px;height:48px;background:#a0a0a0"></div>
<div class="abs" style="left:277px;top:176px;width:543px;height:1px;background:#a0a0a0"></div>
<div class="abs" style="left:277px;top:200px;width:543px;height:1px;background:#a0a0a0"></div>
<div class="abs" style="left:277px;top:224px;width:543px;height:1px;background:#a0a0a0"></div>
<div class="abs" style="left:276px;top:200px;width:40px;height:1px;background:#d6d6d6"></div>
<div class="abs" style="left:317px;top:177px;width:239px;height:23px;background:#0078d7"></div>
<svg class="abs" style="left:283px;top:185px" width="6" height="9" viewBox="0 0 6 9"><path d="M0 0L5.500 4.500L0 9z" fill="#333"/></svg>
<svg class="abs" style="left:284px;top:210px" width="8" height="8" viewBox="0 0 8 8" stroke="#3a3a3a" stroke-width="1.100"><path d="M3.800 1.200v5.600M1.500 2.600l4.600 2.800M6.100 2.600l-4.600 2.800"/><circle cx="3.800" cy="4" r="1.900" fill="#3a3a3a" stroke="none"/></svg>
<div class="abs" style="left:799px;top:178px;width:19px;height:21px;border:1px solid #d0d0d0;border-radius:4px;background:#fdfdfd"></div>
<div class="abs" style="left:799px;top:202px;width:19px;height:21px;border:1px solid #d0d0d0;border-radius:4px;background:#fdfdfd"></div>
<svg class="abs" style="left:800px;top:190px" width="16" height="6"><rect x="2.900" y="2.300" width="1.500" height="1.700" fill="#1a1a2a"/><rect x="6.700" y="2.300" width="1.500" height="1.700" fill="#1a1a2a"/><rect x="10.500" y="2.300" width="1.500" height="1.700" fill="#1a1a2a"/></svg>
</div></div>
<svg class="abs" style="left:305px;top:168px" width="472" height="44" viewBox="305 168 472 44"><rect x="311" y="173.500" width="460.400" height="31.900" rx="1.500" fill="none" stroke="#fd0006" stroke-width="4" stroke-linejoin="round"/></svg>
<span class="t" style="left:36px;top:8.71px;font-size:16px;color:#fff;transform:translateX(0.419px) scaleX(0.94699);">Configuration Form</span>
<span class="t" style="left:169px;top:8.71px;font-size:16px;color:#fff;transform:translateX(0.790px) scaleX(0.87020);">(PRODUCTION)</span>
<span class="t" style="left:18px;top:42.04px;font-size:15px;color:#000;transform:translateX(0.308px) scaleX(0.98267);">File</span>
<span class="t" style="left:32px;top:69.17px;font-size:14px;color:#000;transform:translateX(0.235px) scaleX(0.93883);">General</span>
<span class="t" style="left:111px;top:69.17px;font-size:14px;color:#000;transform:translateX(0.333px) scaleX(0.98336);">Language</span>
<span class="t" style="left:204px;top:69.17px;font-size:14px;color:#000;transform:translateX(0.964px) scaleX(0.98332);">Server</span>
<span class="t" style="left:280px;top:69.17px;font-size:14px;color:#000;transform:translateX(0.209px) scaleX(1.01436);">Web</span>
<span class="t" style="left:342px;top:69.17px;font-size:14px;color:#000;transform:translateX(0.469px) scaleX(0.95621);">Compiler</span>
<span class="t" style="left:407px;top:69.17px;font-size:14px;color:#000;transform:translateX(0.611px) scaleX(0.94459);">Versions</span>
<span class="t" style="left:469px;top:69.17px;font-size:14px;color:#000;transform:translateX(0.367px) scaleX(0.94131);">Mail Settings</span>
<span class="t" style="left:577px;top:69.17px;font-size:14px;color:#000;transform:translateX(0.417px) scaleX(0.95147);">Services</span>
<span class="t" style="left:661px;top:69.17px;font-size:14px;color:#000;transform:translateX(0.219px) scaleX(0.98971);">Security</span>
<span class="t" style="left:723px;top:69.17px;font-size:14px;color:#000;transform:translateX(0.281px) scaleX(0.97760);">Delegation</span>
<span class="t" style="left:10px;top:91.17px;font-size:14px;color:#000;transform:translateX(0.235px) scaleX(0.96662);">Scheduled Tasks</span>
<span class="t" style="left:123px;top:91.17px;font-size:14px;color:#000;transform:translateX(0.337px) scaleX(0.97047);">Mail Integration</span>
<span class="t" style="left:227px;top:91.17px;font-size:14px;color:#000;transform:translateX(0.422px) scaleX(0.98422);">DM Index Server</span>
<span class="t" style="left:342px;top:89.17px;font-size:14px;color:#000;transform:translateX(0.996px) scaleX(0.98391);">Advanced</span>
<span class="t" style="left:135px;top:121.97px;font-size:14px;color:#000;transform:translateX(0.508px) scaleX(0.97658);">Security.PasswordManagement.Strongness</span>
<span class="t" style="left:742px;top:123.37px;font-size:14px;color:#00008c;transform:translateX(0.284px) scaleX(1.00270);">Copy Key</span>
<span class="t" style="left:323px;top:155.07px;font-size:14px;color:#000;transform:translateX(0.465px) scaleX(0.96068);">Key</span>
<span class="t" style="left:563px;top:155.07px;font-size:14px;color:#000;transform:translateX(0.621px) scaleX(0.94912);">Value</span>
<span class="t" style="left:319px;top:179.07px;font-size:14px;color:#fff;transform:translateX(0.194px) scaleX(0.93837);">Enable</span>
<span class="t" style="left:559px;top:179.07px;font-size:14px;color:#000;transform:translateX(0.716px) scaleX(1.07129);">true</span>
<svg class="abs" style="left:743px;top:138px" width="61" height="4"><rect x="0" y="1.500" width="60" height="1.400" fill="#00008c"/></svg>
</div></div>
</body></html>
